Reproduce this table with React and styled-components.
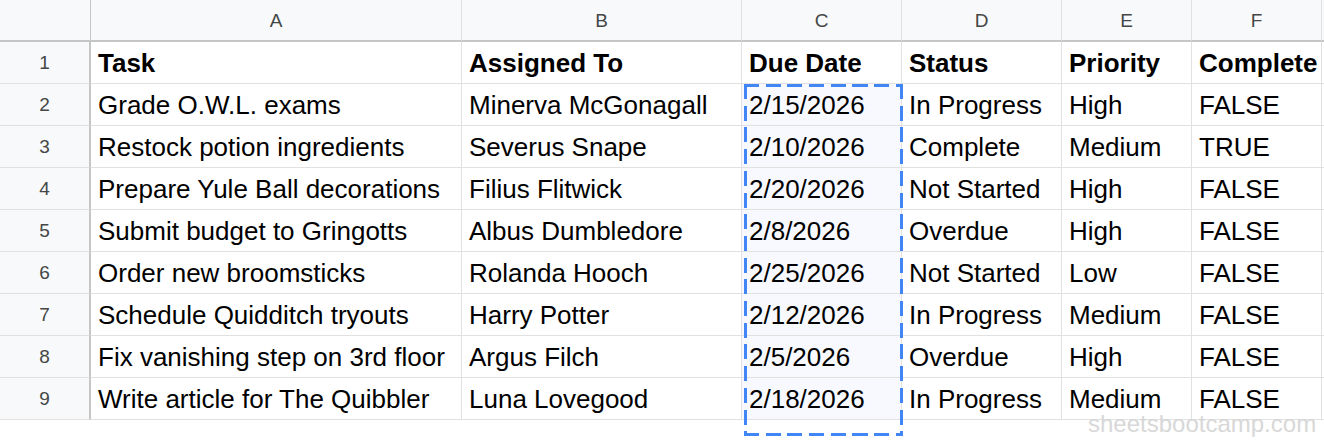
import React from "react";
import styled, { createGlobalStyle } from "styled-components";

const Global = createGlobalStyle`
  html, body { margin: 0; padding: 0; background: #ffffff; }
  body { font-family: "Liberation Sans", Arial, sans-serif; }
`;

const Sheet = styled.div`
  position: relative;
  width: 1324px;
  height: 440px;
  overflow: hidden;
  background: #ffffff;
`;

const Grid = styled.div`
  display: grid;
  grid-template-columns: 91px 371px 280px 160px 160px 130px 130px 3px;
  grid-auto-rows: 42px;
`;

const ColHead = styled.div`
  box-sizing: border-box;
  background: #f8f9fa;
  border-right: 1px solid ${(p) => (p.$corner ? "#c4c7c5" : "#e1e1e1")};
  border-bottom: 2px solid #c4c7c5;
  display: flex;
  align-items: center;
  justify-content: center;
  color: #444746;
  font-size: 19px;
  padding-top: 2px;
`;

const RowNum = styled.div`
  box-sizing: border-box;
  background: #f8f9fa;
  border-right: 2px solid #c4c7c5;
  border-bottom: 1px solid #e1e1e1;
  display: flex;
  align-items: center;
  justify-content: center;
  color: #444746;
  font-size: 19px;
`;

const Cell = styled.div`
  box-sizing: border-box;
  background: ${(p) => (p.$selected ? "#f7f9fe" : "#ffffff")};
  border-right: 1px solid #e1e1e1;
  border-bottom: 1px solid #e1e1e1;
  display: flex;
  align-items: center;
  padding-left: 7px;
  padding-top: 1px;
  white-space: nowrap;
  overflow: hidden;
  color: #000000;
  font-size: 26px;
  line-height: 28px;
  font-weight: ${(p) => (p.$bold ? 700 : 400)};
`;

const dashH = "repeating-linear-gradient(90deg, #4285f4 0 15px, transparent 15px 21.7px)";
const dashV = "repeating-linear-gradient(180deg, #4285f4 0 15px, transparent 15px 21.7px)";

const Marquee = styled.div`
  position: absolute;
  left: 744px;
  top: 84px;
  width: 159px;
  height: 352px;
  pointer-events: none;
  background:
    ${dashH} top left / 100% 3px no-repeat,
    ${dashH} bottom left / 100% 3px no-repeat,
    ${dashV} top left / 3px 100% no-repeat,
    ${dashV} top right / 3px 100% no-repeat;
`;

const Watermark = styled.div`
  position: absolute;
  left: 1088px;
  top: 415px;
  font-size: 24px;
  line-height: 18px;
  color: #d4d4d4;
  opacity: 0.9;
  white-space: nowrap;
`;

const cols = ["A", "B", "C", "D", "E", "F"];
const header = ["Task", "Assigned To", "Due Date", "Status", "Priority", "Complete"];
const rows = [
  ["Grade O.W.L. exams", "Minerva McGonagall", "2/15/2026", "In Progress", "High", "FALSE"],
  ["Restock potion ingredients", "Severus Snape", "2/10/2026", "Complete", "Medium", "TRUE"],
  ["Prepare Yule Ball decorations", "Filius Flitwick", "2/20/2026", "Not Started", "High", "FALSE"],
  ["Submit budget to Gringotts", "Albus Dumbledore", "2/8/2026", "Overdue", "High", "FALSE"],
  ["Order new broomsticks", "Rolanda Hooch", "2/25/2026", "Not Started", "Low", "FALSE"],
  ["Schedule Quidditch tryouts", "Harry Potter", "2/12/2026", "In Progress", "Medium", "FALSE"],
  ["Fix vanishing step on 3rd floor", "Argus Filch", "2/5/2026", "Overdue", "High", "FALSE"],
  ["Write article for The Quibbler", "Luna Lovegood", "2/18/2026", "In Progress", "Medium", "FALSE"],
];

export default function App() {
  return (
    <>
      <Global />
      <Sheet>
        <Grid>
          <ColHead $corner />
          {cols.map((c) => (
            <ColHead key={c}>{c}</ColHead>
          ))}
          <ColHead />
          <RowNum>1</RowNum>
          {header.map((h) => (
            <Cell key={h} $bold>
              {h}
            </Cell>
          ))}
          <Cell />
          {rows.map((r, i) => (
            <React.Fragment key={i}>
              <RowNum>{i + 2}</RowNum>
              {r.map((v, j) => (
                <Cell key={j} $selected={j === 2}>
                  {v}
                </Cell>
              ))}
              <Cell />
            </React.Fragment>
          ))}
        </Grid>
        <Marquee />
        <Watermark>sheetsbootcamp.com</Watermark>
      </Sheet>
    </>
  );
}
